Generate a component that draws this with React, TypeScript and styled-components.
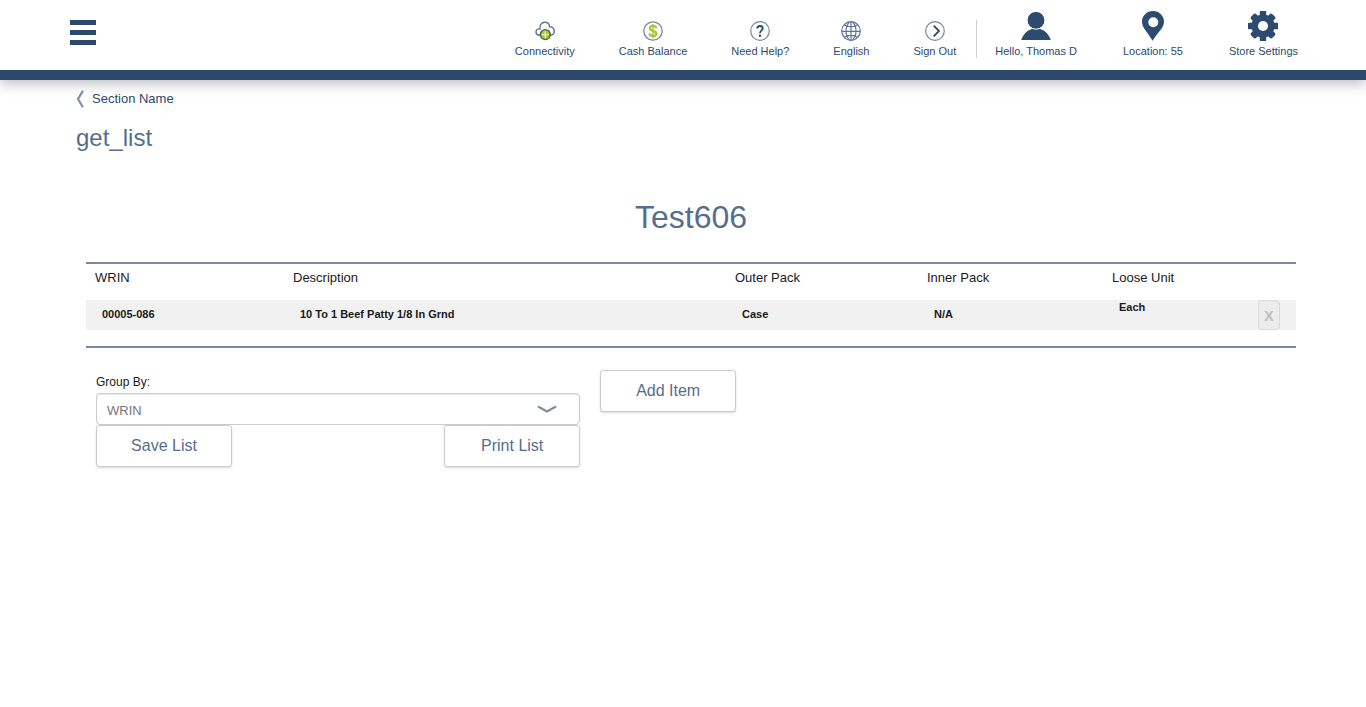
import React from 'react';
import styled, { createGlobalStyle } from 'styled-components';

const navy = '#2d486d';
const slate = '#566d8c';
const rule = '#7b8b9c';

const GlobalStyle = createGlobalStyle`
  * { box-sizing: border-box; }
  body {
    margin: 0;
    background: #fff;
    color: #1a1a1a;
    font-family: Arial, "Liberation Sans", sans-serif;
  }
`;

const Header = styled.header`
  display: flex;
  justify-content: space-between;
  height: 80px;
  padding: 0 68px 0 70px;
  border-bottom: 10px solid ${navy};
  box-shadow: 0 4px 12px rgba(0, 0, 0, 0.25);
`;

const MenuButton = styled.button`
  display: flex;
  flex-direction: column;
  align-self: flex-start;
  gap: 5px;
  margin-top: 20px;
  padding: 0;
  border: 0;
  background: none;
  cursor: pointer;
`;

const MenuBar = styled.span`
  width: 26px;
  height: 5px;
  background: ${navy};
`;

const Nav = styled.nav`
  display: flex;
  align-items: flex-end;
  padding-bottom: 12px;
`;

const NavGroup = styled.div<{ $gap: number }>`
  display: flex;
  align-items: flex-end;
  gap: ${({ $gap }) => $gap}px;
`;

const NavLink = styled.a`
  display: flex;
  flex-direction: column;
  align-items: center;
  gap: 3px;
  color: ${navy};
  font-size: 11px;
  line-height: 14px;
  text-decoration: none;
  white-space: nowrap;

  svg { display: block; }
`;

const Divider = styled.span`
  width: 1px;
  height: 38px;
  margin: 0 18px 0 20px;
  background: #d0d0d0;
`;

const Main = styled.main`
  padding: 10px 70px 24px 76px;
`;

const BackLink = styled.a`
  display: flex;
  align-items: center;
  gap: 8px;
  width: fit-content;
  color: ${navy};
  font-size: 13px;
  line-height: 18px;
  text-decoration: none;
`;

const PageTitle = styled.h1`
  margin: 16px 0 0;
  color: ${slate};
  font-size: 24px;
  font-weight: 400;
  line-height: 28px;
`;

const Content = styled.section`
  margin: 47px 0 0 10px;
`;

const ListTitle = styled.h2`
  margin: 0 0 27px;
  color: ${slate};
  font-size: 32px;
  font-weight: 400;
  line-height: 36px;
  text-align: center;
`;

const TableFrame = styled.div`
  padding-bottom: 16px;
  border-top: 2px solid ${rule};
  border-bottom: 2px solid ${rule};
`;

const Table = styled.table`
  width: 100%;
  table-layout: fixed;
  border-collapse: collapse;
  text-align: left;
`;

const Column = styled.col<{ $width?: number }>`
  width: ${({ $width }) => ($width ? `${$width}px` : 'auto')};
`;

const HeadCell = styled.th`
  height: 36px;
  padding: 5px 0 0 9px;
  font-size: 13px;
  font-weight: 400;
  line-height: 18px;
  vertical-align: top;
`;

const Row = styled.tr`
  background: #f1f1f1;
`;

const Cell = styled.td<{ $align?: string }>`
  height: 30px;
  padding: 0 0 2px 16px;
  font-size: 11px;
  font-weight: 700;
  line-height: 14px;
  vertical-align: ${({ $align }) => $align ?? 'middle'};
`;

const ActionCell = styled.td`
  height: 30px;
  padding: 0 16px 0 0;
`;

const RemoveButton = styled.button`
  display: block;
  width: 22px;
  height: 30px;
  margin-left: auto;
  padding: 2px 0 0;
  border: 1px solid #d9d9d9;
  border-radius: 4px;
  background: #ececec;
  color: #bdbdbd;
  font: 700 14px/18px Arial, "Liberation Sans", sans-serif;
`;

const Controls = styled.div`
  display: grid;
  grid-template-columns: 5fr 7fr;
  margin-top: 22px;
`;

const ControlColumn = styled.div`
  padding: 0 10px;
`;

const FieldLabel = styled.label`
  display: block;
  padding: 4px 0 3px;
  font-size: 12px;
  line-height: 16px;
`;

const SelectBox = styled.div`
  position: relative;

  svg {
    position: absolute;
    top: 12px;
    right: 23px;
    pointer-events: none;
  }
`;

const Select = styled.select`
  display: block;
  width: 100%;
  height: 32px;
  padding: 3px 10px 0;
  border: 1px solid #ccc;
  border-radius: 4px;
  background: #fff;
  box-shadow: inset 0 1px 1px rgba(0, 0, 0, 0.08);
  color: #777;
  font: 13px/18px Arial, "Liberation Sans", sans-serif;
  appearance: none;
`;

const ButtonRow = styled.div`
  display: flex;
  justify-content: space-between;
`;

const Button = styled.button`
  width: 136px;
  height: 42px;
  padding: 0;
  border: 1px solid #ccc;
  border-radius: 3px;
  background: #fff;
  box-shadow: 0 1px 2px rgba(0, 0, 0, 0.15);
  color: ${slate};
  font: 16px/20px Arial, "Liberation Sans", sans-serif;
  cursor: pointer;
`;

const CloudIcon = () => (
  <svg width="20" height="20" viewBox="0 0 20 20" fill="none" aria-hidden="true">
    <path
      d="M5 14.2H3.8A3.2 3.2 0 0 1 3.6 7.9C4 7.8 4.6 7.9 5 8C4.2 4.4 6.4 1.3 9.8 1.3C12.6 1.3 14.4 3.2 14.6 5.8C17.4 5.6 19.3 7.6 19.3 10C19.3 12.4 17.6 14.2 15 14.2"
      stroke="#5f7692"
      strokeWidth="1.4"
    />
    <circle cx="10.3" cy="13.6" r="5" fill="#a5c532" stroke="#49634f" strokeWidth="1.3" />
    <path d="M10.3 10.2V17M6.9 13.6H13.7" stroke="#e6f0b8" strokeWidth="1.4" />
  </svg>
);

const CashIcon = () => (
  <svg width="20" height="20" viewBox="0 0 20 20" fill="none" aria-hidden="true">
    <circle cx="10" cy="10" r="9.2" stroke="#7288a3" strokeWidth="1.3" />
    <path
      d="M13.3 7.2C12.9 5.5 11.6 4.9 10 4.9C8.1 4.9 6.8 5.8 6.8 7.3C6.8 10.6 13.4 9.1 13.4 12.5C13.4 14.2 11.9 15.1 10 15.1C8 15.1 6.7 14.1 6.5 12.4"
      stroke="#a8c735"
      strokeWidth="2.3"
    />
    <path d="M10 3V17" stroke="#a8c735" strokeWidth="1.5" />
  </svg>
);

const HelpIcon = () => (
  <svg width="20" height="20" viewBox="0 0 20 20" fill="none" aria-hidden="true">
    <circle cx="10" cy="10" r="9.3" stroke="#7288a3" strokeWidth="1.2" />
    <path
      d="M7.2 7.6C7.2 5.9 8.3 5 10 5C11.7 5 12.8 6 12.8 7.4C12.8 9.3 10 9.7 10 12.2"
      stroke={navy}
      strokeWidth="1.8"
    />
    <circle cx="10" cy="14.7" r="1.2" fill={navy} />
  </svg>
);

const GlobeIcon = () => (
  <svg width="20" height="20" viewBox="0 0 20 20" fill="none" stroke="#5d7592" strokeWidth="1.2" aria-hidden="true">
    <circle cx="10" cy="10" r="9.3" />
    <path d="M.7 10.3H19.3M10 .7V19.3M3.5 3.7C6.5 6.4 13.5 6.4 16.5 3.7M3.5 16.3C6.5 13.7 13.5 13.7 16.5 16.3" />
    <path d="M8.5 .9C3.8 6 3.8 14 8.5 19.1M11.5 .9C16.2 6 16.2 14 11.5 19.1" />
  </svg>
);

const SignOutIcon = () => (
  <svg width="20" height="20" viewBox="0 0 20 20" fill="none" aria-hidden="true">
    <circle cx="10" cy="10" r="9.3" stroke="#7288a3" strokeWidth="1.2" />
    <path d="M8.7 4.7L14 10L8.7 15.3" stroke={navy} strokeWidth="1.8" />
  </svg>
);

const PersonIcon = () => (
  <svg width="30" height="30" viewBox="0 0 30 30" fill="#2c4b6f" aria-hidden="true">
    <path d="M.2 29C2.6 22 8 17.6 15 17.6C22 17.6 27.4 22 29.8 29Z" />
    <circle cx="15" cy="9.3" r="8.9" stroke="#fff" strokeWidth="1" />
  </svg>
);

const PinIcon = () => (
  <svg width="22" height="30" viewBox="0 0 22 30" aria-hidden="true">
    <path
      fill="#2c4b6f"
      fillRule="evenodd"
      d="M11 0C4.8 0 0 4.8 0 10.8C0 17 6 21.8 10.6 29.8C15.4 21.8 22 17 22 10.8C22 4.8 17.2 0 11 0ZM11.3 6.2A5 5 0 1 1 11.3 16.2A5 5 0 0 1 11.3 6.2Z"
    />
  </svg>
);

const GearIcon = () => (
  <svg width="30" height="30" viewBox="0 0 30 30" fill="#2c4b6f" aria-hidden="true">
    {[0, 90].map((angle) => (
      <rect key={angle} x="11.8" width="6.4" height="30" rx="0.6" transform={`rotate(${angle} 15 15)`} />
    ))}
    {[45, 135].map((angle) => (
      <rect key={angle} x="11.4" width="7.2" height="30" rx="2" transform={`rotate(${angle} 15 15)`} />
    ))}
    <circle cx="15" cy="15" r="11.6" />
    <circle cx="15" cy="15" r="5" fill="#fff" />
  </svg>
);

const utilityLinks = [
  { label: 'Connectivity', Icon: CloudIcon },
  { label: 'Cash Balance', Icon: CashIcon },
  { label: 'Need Help?', Icon: HelpIcon },
  { label: 'English', Icon: GlobeIcon },
  { label: 'Sign Out', Icon: SignOutIcon },
];

const accountLinks = [
  { label: 'Hello, Thomas D', Icon: PersonIcon },
  { label: 'Location: 55', Icon: PinIcon },
  { label: 'Store Settings', Icon: GearIcon },
];

const items = [
  { wrin: '00005-086', description: '10 To 1 Beef Patty 1/8 In Grnd', outer: 'Case', inner: 'N/A', loose: 'Each' },
];

export default function App() {
  return (
    <>
      <GlobalStyle />
      <Header>
        <MenuButton type="button" aria-label="Menu">
          <MenuBar />
          <MenuBar />
          <MenuBar />
        </MenuButton>
        <Nav>
          <NavGroup $gap={44}>
            {utilityLinks.map(({ label, Icon }) => (
              <NavLink href="#" key={label}>
                <Icon />
                {label}
              </NavLink>
            ))}
          </NavGroup>
          <Divider />
          <NavGroup $gap={46}>
            {accountLinks.map(({ label, Icon }) => (
              <NavLink href="#" key={label}>
                <Icon />
                {label}
              </NavLink>
            ))}
          </NavGroup>
        </Nav>
      </Header>
      <Main>
        <BackLink href="#">
          <svg width="8" height="18" viewBox="0 0 8 18" fill="none" aria-hidden="true">
            <path d="M7 .8L2 9L7 17.2" stroke="#7f8ea1" strokeWidth="2.2" />
          </svg>
          Section Name
        </BackLink>
        <PageTitle>get_list</PageTitle>
        <Content>
          <ListTitle>Test606</ListTitle>
          <TableFrame>
            <Table>
              <colgroup>
                <Column $width={198} />
                <Column />
                <Column $width={192} />
                <Column $width={185} />
                <Column $width={146} />
                <Column $width={47} />
              </colgroup>
              <thead>
                <tr>
                  <HeadCell scope="col">WRIN</HeadCell>
                  <HeadCell scope="col">Description</HeadCell>
                  <HeadCell scope="col">Outer Pack</HeadCell>
                  <HeadCell scope="col">Inner Pack</HeadCell>
                  <HeadCell scope="col">Loose Unit</HeadCell>
                  <td />
                </tr>
              </thead>
              <tbody>
                {items.map((item) => (
                  <Row key={item.wrin}>
                    <Cell>{item.wrin}</Cell>
                    <Cell>{item.description}</Cell>
                    <Cell>{item.outer}</Cell>
                    <Cell>{item.inner}</Cell>
                    <Cell $align="top">{item.loose}</Cell>
                    <ActionCell>
                      <RemoveButton type="button" disabled>X</RemoveButton>
                    </ActionCell>
                  </Row>
                ))}
              </tbody>
            </Table>
          </TableFrame>
          <Controls>
            <ControlColumn>
              <FieldLabel htmlFor="group-by">Group By:</FieldLabel>
              <SelectBox>
                <Select id="group-by" defaultValue="WRIN">
                  <option>WRIN</option>
                </Select>
                <svg width="20" height="9" viewBox="0 0 20 9" fill="none" aria-hidden="true">
                  <path d="M1 1.5L10 6.5L19 1.5" stroke="#7f8ea1" strokeWidth="2.2" strokeLinejoin="round" />
                </svg>
              </SelectBox>
              <ButtonRow>
                <Button type="button">Save List</Button>
                <Button type="button">Print List</Button>
              </ButtonRow>
            </ControlColumn>
            <ControlColumn>
              <Button type="button">Add Item</Button>
            </ControlColumn>
          </Controls>
        </Content>
      </Main>
    </>
  );
}
